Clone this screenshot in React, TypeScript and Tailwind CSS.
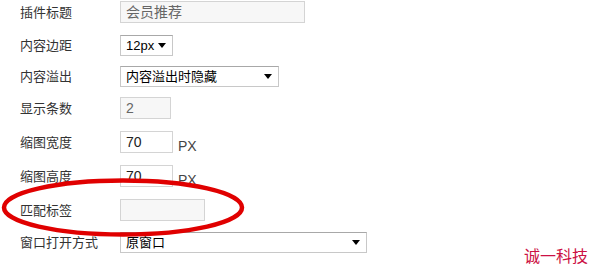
const cjk = { fontFamily: '"Liberation Sans", "Noto Sans CJK SC", sans-serif' };

function Label({ children }: { children: React.ReactNode }) {
  return (
    <div className="w-[120px] shrink-0 pl-[20px] text-[13px] leading-none text-[#333]" style={cjk}>
      {children}
    </div>
  );
}

function Caret() {
  return <span className="h-0 w-0 border-x-[4px] border-t-[5px] border-x-transparent border-t-black" />;
}

function Select({ value, width }: { value: string; width: string }) {
  return (
    <div
      className={`${width} flex h-[21px] items-center justify-between border border-[#c8c8c8] border-t-[#a8a8a8] bg-white pl-[5px] pr-[6px] text-[13px] text-black`}
      style={cjk}
    >
      <span className="leading-none">{value}</span>
      <Caret />
    </div>
  );
}

function Field({ value, width, disabled }: { value?: string; width: string; disabled?: boolean }) {
  return (
    <div
      className={`${width} flex h-[22px] items-center border border-[#d4d4d4] px-[5px] text-[14px] leading-none ${
        disabled ? "bg-[#f7f7f7] text-[#666]" : "bg-white text-[#222]"
      }`}
      style={cjk}
    >
      {value}
    </div>
  );
}

function Px() {
  return (
    <span className="ml-[5px] mt-[8px] text-[14px] leading-none text-[#444]" style={cjk}>
      PX
    </span>
  );
}

export default function App() {
  return (
    <div className="relative h-[273px] w-[594px] overflow-hidden bg-white">
      <div className="flex flex-col pt-[1px]">
        <div className="flex items-center">
          <Label>插件标题</Label>
          <Field value="会员推荐" width="w-[185px]" disabled />
        </div>
        <div className="mt-[12px] flex items-center">
          <Label>内容边距</Label>
          <Select value="12px" width="w-[53px]" />
        </div>
        <div className="mt-[10px] flex items-center">
          <Label>内容溢出</Label>
          <Select value="内容溢出时隐藏" width="w-[159px]" />
        </div>
        <div className="mt-[10px] flex items-center">
          <Label>显示条数</Label>
          <Field value="2" width="w-[51px]" disabled />
        </div>
        <div className="mt-[12px] flex items-center">
          <Label>缩图宽度</Label>
          <Field value="70" width="w-[53px]" />
          <Px />
        </div>
        <div className="mt-[12px] flex items-center">
          <Label>缩图高度</Label>
          <Field value="70" width="w-[53px]" />
          <Px />
        </div>
        <div className="mt-[12px] flex items-center">
          <Label>匹配标签</Label>
          <Field width="w-[85px]" disabled />
        </div>
        <div className="mt-[11px] flex items-center">
          <Label>窗口打开方式</Label>
          <Select value="原窗口" width="w-[247px]" />
        </div>
      </div>

      {/* red annotation ring */}
      <svg className="pointer-events-none absolute left-0 top-0" width="594" height="273">
        <ellipse cx="123" cy="207.5" rx="119" ry="27" fill="none" stroke="#e00000" strokeWidth="4.5" />
      </svg>

      <div className="absolute left-[524px] top-[249px] text-[16px] leading-none text-[#cc1144]" style={cjk}>
        诚一科技
      </div>
    </div>
  );
}
